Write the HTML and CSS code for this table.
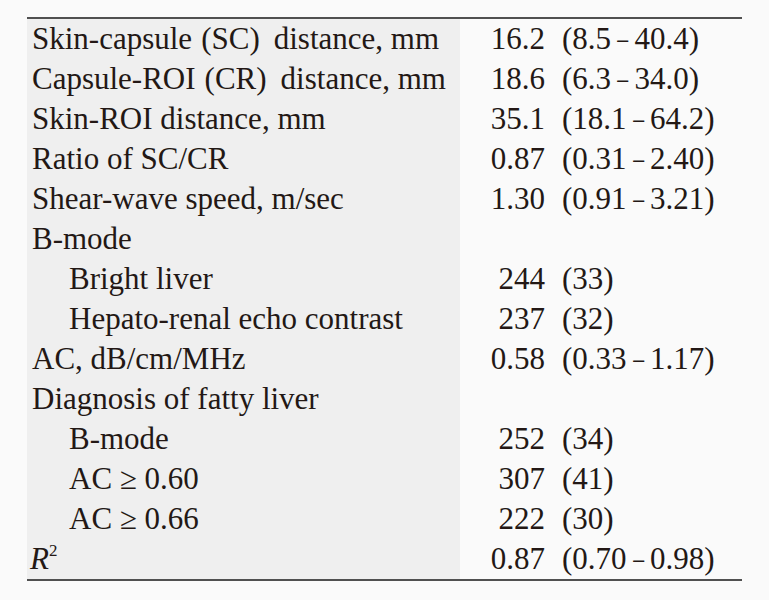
FILE: index.html
```html
<!DOCTYPE html>
<html>
<head>
<meta charset="utf-8">
<link rel="stylesheet" href="styles.css">
</head>
<body>
<table class="data">
<colgroup><col class="c1"><col class="c2"></colgroup>
<tbody>
<tr><td class="lbl">Skin-capsule<span class="fp">(</span>SC<span class="fp r">)</span>distance, mm</td><td class="val"><span class="num">16.2</span><span class="rng">(8.5<span class="dash">–</span>40.4)</span></td></tr>
<tr><td class="lbl">Capsule-ROI<span class="fp">(</span>CR<span class="fp r">)</span>distance, mm</td><td class="val"><span class="num">18.6</span><span class="rng">(6.3<span class="dash">–</span>34.0)</span></td></tr>
<tr><td class="lbl">Skin-ROI distance, mm</td><td class="val"><span class="num">35.1</span><span class="rng">(18.1<span class="dash">–</span>64.2)</span></td></tr>
<tr><td class="lbl">Ratio of SC/CR</td><td class="val"><span class="num">0.87</span><span class="rng">(0.31<span class="dash">–</span>2.40)</span></td></tr>
<tr><td class="lbl">Shear-wave speed, m/sec</td><td class="val"><span class="num">1.30</span><span class="rng">(0.91<span class="dash">–</span>3.21)</span></td></tr>
<tr><td class="lbl">B-mode</td><td class="val"></td></tr>
<tr><td class="lbl sub">Bright liver</td><td class="val"><span class="num">244</span><span class="rng">(33)</span></td></tr>
<tr><td class="lbl sub">Hepato-renal echo contrast</td><td class="val"><span class="num">237</span><span class="rng">(32)</span></td></tr>
<tr><td class="lbl">AC, dB/cm/MHz</td><td class="val"><span class="num">0.58</span><span class="rng">(0.33<span class="dash">–</span>1.17)</span></td></tr>
<tr><td class="lbl">Diagnosis of fatty liver</td><td class="val"></td></tr>
<tr><td class="lbl sub">B-mode</td><td class="val"><span class="num">252</span><span class="rng">(34)</span></td></tr>
<tr><td class="lbl sub">AC ≥ 0.60</td><td class="val"><span class="num">307</span><span class="rng">(41)</span></td></tr>
<tr><td class="lbl sub">AC ≥ 0.66</td><td class="val"><span class="num">222</span><span class="rng">(30)</span></td></tr>
<tr><td class="lbl"><i class="rsq">R</i><sup class="sq">2</sup></td><td class="val"><span class="num">0.87</span><span class="rng">(0.70<span class="dash">–</span>0.98)</span></td></tr>
</tbody>
</table>
</body>
</html>
```
FILE: styles.css
```css
html, body {
  margin: 0;
  padding: 0;
  background: #fafafa;
}
body {
  padding: 17px 0 0 27px;
  font-family: "Liberation Serif", "Times New Roman", serif;
  color: #231815;
}
.data {
  border-collapse: collapse;
  table-layout: fixed;
  width: 715px;
  border-top: 2px solid #505050;
  border-bottom: 2px solid #505050;
  font-size: 31px;
}
.c1 {
  width: 433px;
}
.c2 {
  width: 282px;
}
.data td {
  padding: 0;
  height: 40px;
  line-height: 40px;
  white-space: nowrap;
  vertical-align: top;
  overflow: visible;
}
.lbl {
  background: #efefef;
  padding-left: 5px !important;
}
.lbl.sub {
  padding-left: 42px !important;
}
.val {
  background: #fafafa;
}
.num {
  display: inline-block;
  width: 85px;
  text-align: right;
}
.rng {
  display: inline-block;
  margin-left: 17px;
}
.dash {
  display: inline-block;
  margin: 0 4px;
  transform: scaleX(0.7);
}
.fp {
  display: inline-block;
  margin: 0 0 0 9px;
}
.fp.r {
  margin: 0 14px 0 0;
}
.rsq {
  margin-left: -2px;
}
.sq {
  font-size: 17px;
  line-height: 0;
  vertical-align: 0;
  position: relative;
  top: -13px;
}
```
